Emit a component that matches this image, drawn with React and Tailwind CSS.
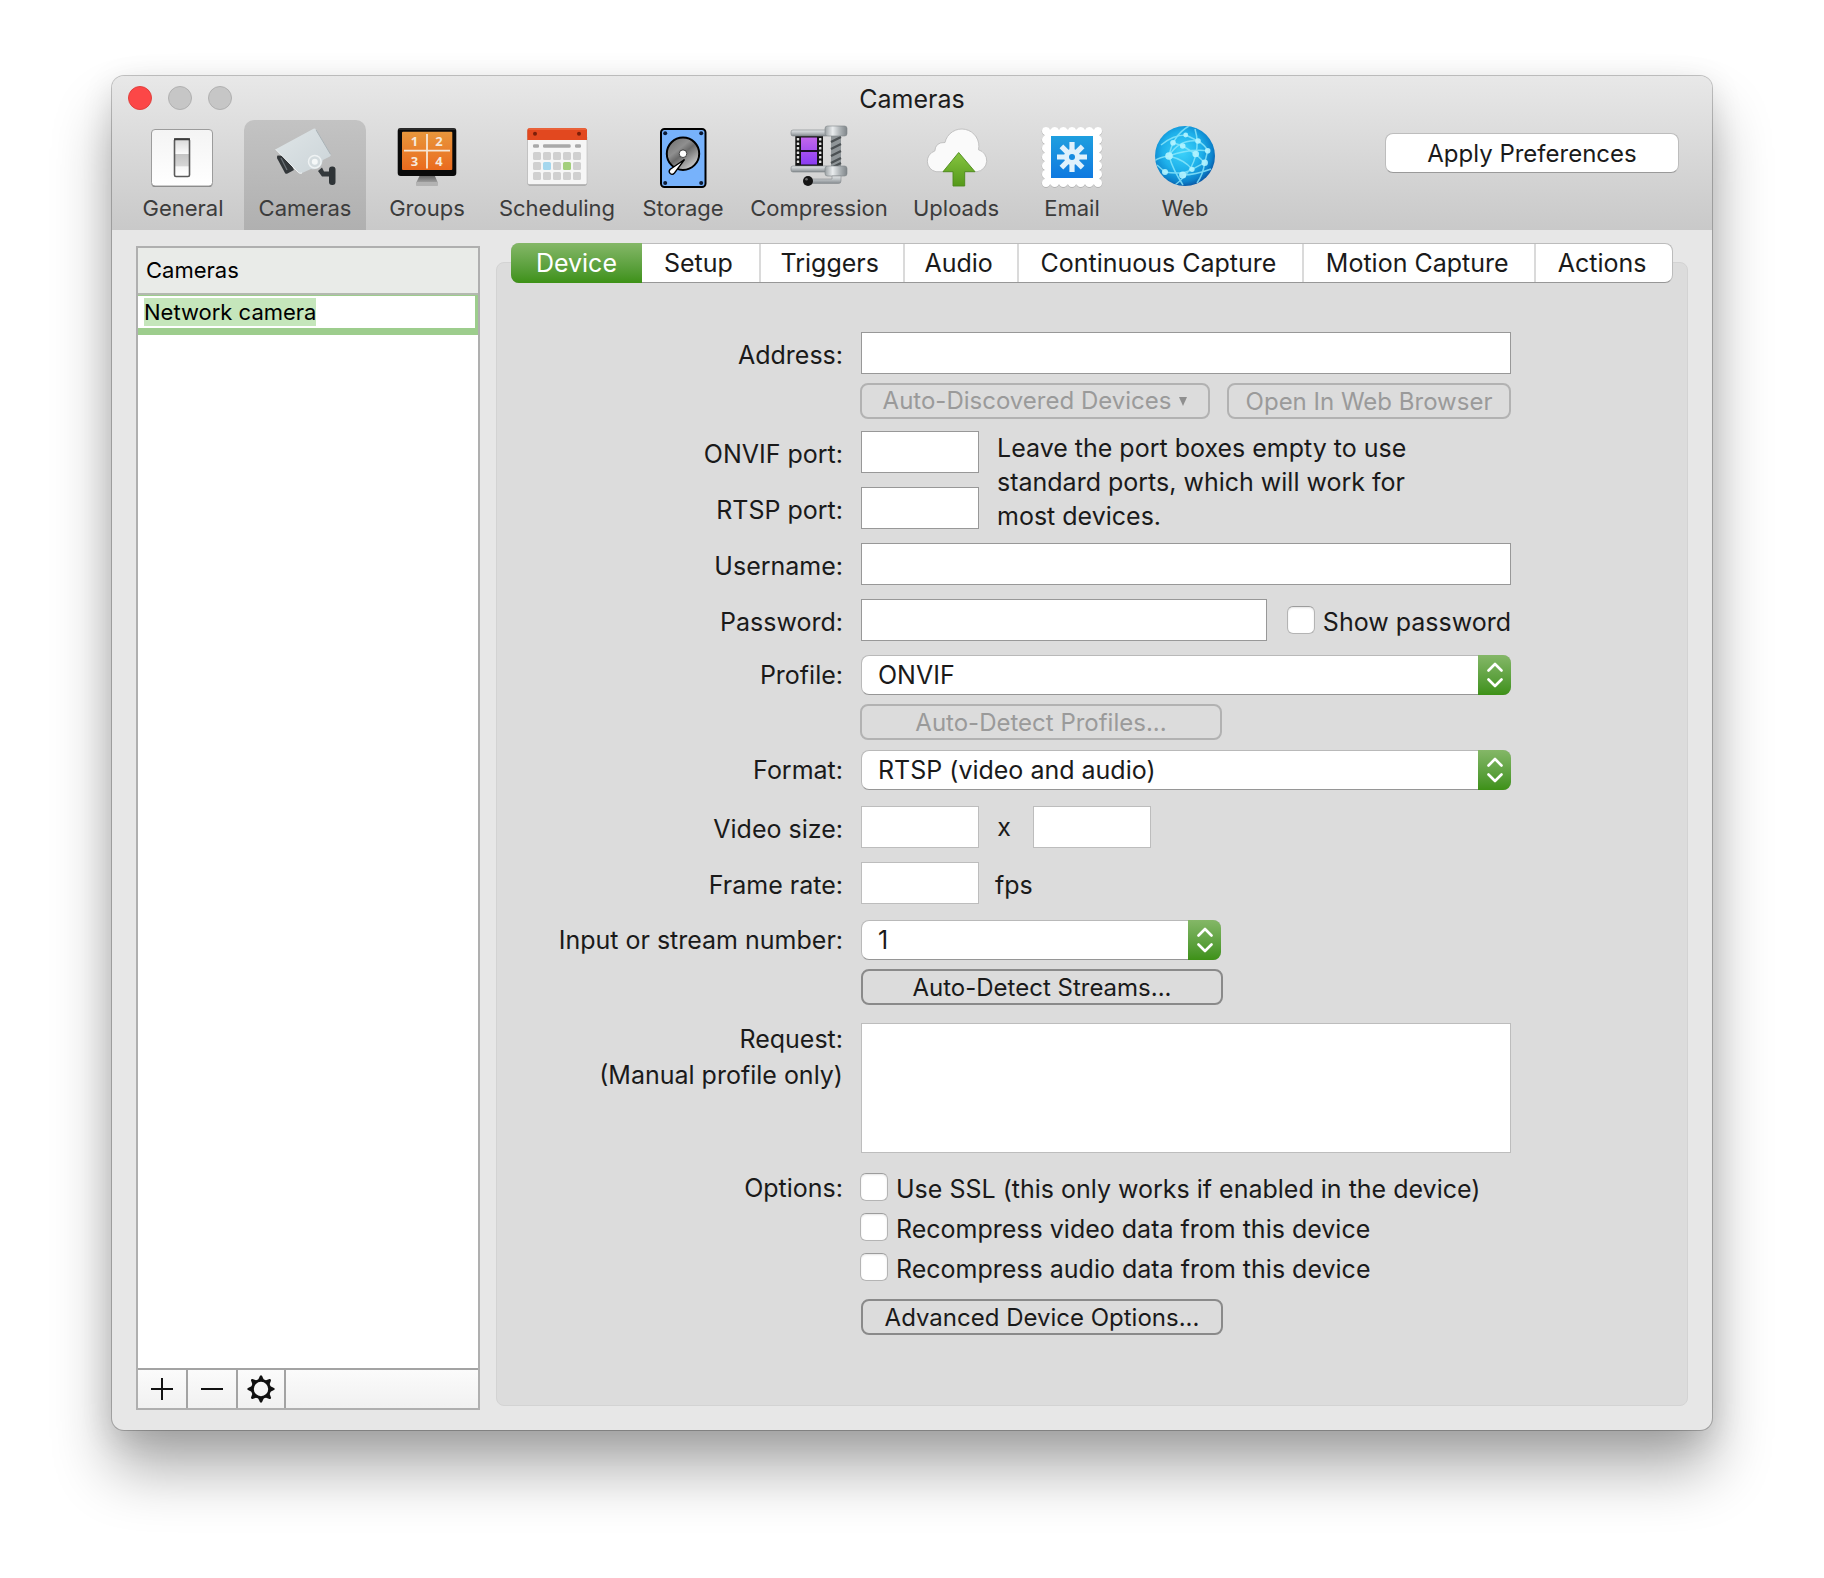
import React from "react";

function GeneralIcon() {
  return (
    <svg viewBox="0 0 64 64" className="size-16" aria-hidden="true">
      <defs>
        <linearGradient id="gen-plate" x1="0" y1="0" x2="0" y2="1">
          <stop offset="0" stopColor="#f4f4f4" />
          <stop offset="1" stopColor="#ffffff" />
        </linearGradient>
        <linearGradient id="gen-switch" x1="0" y1="0" x2="0" y2="1">
          <stop offset="0" stopColor="#d9d9d9" />
          <stop offset="0.4" stopColor="#fbfbfb" />
          <stop offset="0.41" stopColor="#c4c4c4" />
          <stop offset="0.72" stopColor="#d6d6d6" />
          <stop offset="0.74" stopColor="#f6f6f6" />
          <stop offset="1" stopColor="#ffffff" />
        </linearGradient>
      </defs>
      <rect x="0.5" y="5" width="61" height="57" rx="3.5" fill="#7d7d7d" />
      <rect x="0.5" y="4.5" width="61" height="56.5" rx="3.5" fill="url(#gen-plate)" stroke="#9c9c9c" />
      <rect x="23.500" y="14" width="15" height="37.500" rx="1.500" fill="url(#gen-switch)" stroke="#5a5a5a" strokeWidth="1.600" />
      <path d="M23 14.200h16" stroke="#3d3d3d" strokeWidth="2" />
    </svg>
  );
}

function CameraIcon() {
  return (
    <svg viewBox="0 0 64 64" className="size-16" aria-hidden="true">
      <defs>
        <linearGradient id="cam-body" x1="0" y1="0" x2="1" y2="1">
          <stop offset="0" stopColor="#dfe5e7" />
          <stop offset="1" stopColor="#cbd4d8" />
        </linearGradient>
      </defs>
      <path d="M4.500 30.500q-1 1.500-.3 3L12 48q1 1.300 2.500.6l6.500-3.500-7-14z" fill="#33373a" />
      <path d="M8 33l6 12" stroke="#6a7175" strokeWidth="1.200" />
      <path d="M45 46l4 5.500h9v-5h-7l-2-4z" fill="#34393c" />
      <rect x="56" y="41.500" width="6.500" height="18.500" rx="3" fill="#2f3437" />
      <path d="M2.700 24.300L40.500 3.800q1.600-.8 2.500.8L57.700 29.500q.5 1.200-.8 1.900l-7 3.600-1.500 5q-4 5.500-10.400 4L29 48q-2 .8-3.500-.4z" fill="url(#cam-body)" />
      <path d="M2.700 24.300L25.500 47.600q1.500 1.200 3.500.4" fill="none" stroke="#f3f6f7" strokeWidth="1" />
      <path d="M43 4.800l14.500 24.500" stroke="#a9b2b6" strokeWidth="1" />
      <circle cx="41.800" cy="36.700" r="6.300" fill="#d3dbde" stroke="#eef2f3" strokeWidth="1.500" />
      <circle cx="41.800" cy="36.700" r="3" fill="#f5f8f8" />
    </svg>
  );
}

function GroupsIcon() {
  return (
    <svg viewBox="0 0 64 64" className="size-16" aria-hidden="true">
      <defs>
        <linearGradient id="grp-screen" x1="0" y1="0" x2="0" y2="1">
          <stop offset="0" stopColor="#e8973c" />
          <stop offset="1" stopColor="#ea6a1e" />
        </linearGradient>
        <linearGradient id="grp-stand" x1="0" y1="0" x2="0" y2="1">
          <stop offset="0" stopColor="#5d5d5d" />
          <stop offset="1" stopColor="#a5a5a5" />
        </linearGradient>
      </defs>
      <path d="M25 50h14.500l3.500 8H21z" fill="url(#grp-stand)" />
      <rect x="21" y="57" width="22" height="4" rx="0.800" fill="#b3b3b3" />
      <rect x="2.700" y="3" width="58.600" height="48" rx="3" fill="#0a0a0a" />
      <rect x="3.500" y="3.600" width="57" height="1" rx="0.500" fill="#4a4a4a" />
      <rect x="7" y="6.700" width="50.300" height="38.300" rx="1" fill="url(#grp-screen)" />
      <path d="M32 9v34.500M9 25.700h46" stroke="#f6e6d6" strokeWidth="1.800" />
      <g fill="#f6e9dc" fontFamily="Open Sans, Noto Sans, sans-serif" fontWeight="700" fontSize="13" textAnchor="middle">
        <text x="19.500" y="21">1</text>
        <text x="44" y="21">2</text>
        <text x="19.500" y="41">3</text>
        <text x="44" y="41">4</text>
      </g>
    </svg>
  );
}

const calendarRows = [27, 37, 47];
const calendarCols = [8, 18, 28, 38, 48];

function SchedulingIcon() {
  return (
    <svg viewBox="0 0 64 64" className="size-16" aria-hidden="true">
      <rect x="2.500" y="4" width="59.500" height="56.500" rx="2" fill="#8c8c8c" />
      <path d="M2.500 12h59.500v46q0 1.500-1.500 1.500h-56.500q-1.500 0-1.500-1.500z" fill="#f6f6f6" stroke="#b5b5b5" strokeWidth="0.600" />
      <path d="M2.300 15V5.500q0-2.500 2.500-2.500h54.700q2.500 0 2.500 2.500V15z" fill="#e2481f" />
      <path d="M3.500 4h57.500" stroke="#ef7a55" strokeWidth="1" />
      <circle cx="10" cy="8.700" r="2" fill="#7c1f0a" />
      <circle cx="54" cy="8.700" r="2" fill="#7c1f0a" />
      <g fill="#a9a9a9">
        <rect x="8" y="19.200" width="6" height="3.600" rx="1.300" />
        <rect x="18" y="19.200" width="27.700" height="3.600" rx="1.300" />
        <rect x="50" y="19.200" width="6" height="3.600" rx="1.300" />
      </g>
      {calendarRows.map((y, r) =>
        calendarCols.map((x, c) => (
          <rect
            key={x + "-" + y}
            x={x}
            y={y}
            width="8"
            height="8"
            rx="1.500"
            fill={r === 1 && c === 1 ? "#a5d7ee" : r === 1 && c === 3 ? "#a3cf7c" : "#d0d0d0"}
          />
        ))
      )}
    </svg>
  );
}

function StorageIcon() {
  return (
    <svg viewBox="0 0 64 64" className="size-16" aria-hidden="true">
      <defs>
        <linearGradient id="hdd-disc" x1="0.100" y1="0" x2="0.900" y2="1">
          <stop offset="0" stopColor="#6f6f6f" />
          <stop offset="0.350" stopColor="#8f8f8f" />
          <stop offset="0.500" stopColor="#6a6a6a" />
          <stop offset="1" stopColor="#e4e4e4" />
        </linearGradient>
      </defs>
      <rect x="10" y="4" width="44.500" height="58" rx="3.500" fill="#77b2fb" stroke="#000" strokeWidth="2" />
      <g fill="#0c1a33">
        <circle cx="14.200" cy="8.200" r="2" />
        <circle cx="50.200" cy="8.200" r="2" />
        <circle cx="14.200" cy="58" r="2" />
        <circle cx="50.200" cy="58" r="2" />
      </g>
      <circle cx="32" cy="28.700" r="16.200" fill="url(#hdd-disc)" stroke="#000" strokeWidth="2" />
      <circle cx="32" cy="28.700" r="3.800" fill="#fff" stroke="#222" strokeWidth="0.800" />
      <path d="M33.500 34.500L23.500 48q-2 2.300-4.300.6-2-1.800-.2-4.100z" fill="#fff" stroke="#000" strokeWidth="1.300" />
    </svg>
  );
}

const sprocketRows = [13, 17.5, 22, 26.5, 31, 35.5];

function CompressionIcon() {
  return (
    <svg viewBox="0 0 64 64" className="size-16" aria-hidden="true">
      <defs>
        <linearGradient id="cmp-metal" x1="0" y1="0" x2="0" y2="1">
          <stop offset="0" stopColor="#e3e6e8" />
          <stop offset="0.500" stopColor="#b9bec1" />
          <stop offset="1" stopColor="#858b8f" />
        </linearGradient>
        <linearGradient id="cmp-nut" x1="0" y1="0" x2="1" y2="0">
          <stop offset="0" stopColor="#9ba1a4" />
          <stop offset="0.350" stopColor="#e9ecee" />
          <stop offset="0.700" stopColor="#aab0b3" />
          <stop offset="1" stopColor="#7f8589" />
        </linearGradient>
        <linearGradient id="cmp-film" x1="0" y1="0" x2="0" y2="1">
          <stop offset="0" stopColor="#c267ec" />
          <stop offset="1" stopColor="#8a3cf2" />
        </linearGradient>
      </defs>
      <rect x="44" y="10" width="10" height="32" fill="#8f9598" />
      <path d="M44 17l10-5M44 24l10-5M44 31l10-5M44 38l10-5M46 42l8-4" stroke="#4c5154" strokeWidth="2.400" />
      <rect x="8.300" y="10.500" width="27.700" height="31" fill="#141414" />
      <rect x="14" y="12.500" width="16" height="27" fill="url(#cmp-film)" />
      <rect x="14" y="25" width="16" height="2" fill="#1b1026" />
      {sprocketRows.map((y) => (
        <g key={y} fill="#e2e2e2">
          <rect x="9.800" y={y} width="2.400" height="2.600" rx="0.500" />
          <rect x="32" y={y} width="2.400" height="2.600" rx="0.500" />
        </g>
      ))}
      <rect x="4" y="5" width="37" height="6" rx="2" fill="url(#cmp-metal)" stroke="#7e8487" strokeWidth="0.600" />
      <rect x="4" y="41" width="37" height="6" rx="2" fill="url(#cmp-metal)" stroke="#7e8487" strokeWidth="0.600" />
      <rect x="38" y="1" width="22" height="10" rx="2.500" fill="url(#cmp-nut)" stroke="#7e8487" strokeWidth="0.600" />
      <rect x="38" y="41" width="22" height="10" rx="2.500" fill="url(#cmp-nut)" stroke="#7e8487" strokeWidth="0.600" />
      <path d="M22 54h23v-3h9v5q0 2.500-2.500 2.500H22z" fill="url(#cmp-metal)" stroke="#868c8f" strokeWidth="0.600" />
      <circle cx="21" cy="56" r="5" fill="#151515" />
      <circle cx="19.500" cy="54.200" r="1.300" fill="#6b6b6b" />
    </svg>
  );
}

function UploadsIcon() {
  return (
    <svg viewBox="0 0 64 64" className="size-16" aria-hidden="true">
      <defs>
        <linearGradient id="upl-arrow" x1="0" y1="0" x2="0" y2="1">
          <stop offset="0" stopColor="#86c440" />
          <stop offset="1" stopColor="#55991a" />
        </linearGradient>
      </defs>
      <path
        d="M12 46.700A10.700 10.700 0 0 1 10.800 26Q11.500 17 21 17.500A17 17 0 0 1 54.500 24.800A11.200 11.200 0 0 1 53 46.700z"
        fill="#fafafa"
        stroke="#bdbdbd"
        strokeWidth="0.900"
      />
      <path d="M34.700 27.500L51 46.700H40.700V61H29V46.700H19z" fill="url(#upl-arrow)" stroke="#4c8a1b" strokeWidth="0.900" strokeLinejoin="round" />
    </svg>
  );
}

const gearAngles = [0, 45, 90, 135];

function EmailIcon() {
  return (
    <svg viewBox="0 0 64 64" className="size-16" aria-hidden="true">
      <defs>
        <linearGradient id="eml-blue" x1="0" y1="0" x2="0" y2="1">
          <stop offset="0" stopColor="#1f9fdf" />
          <stop offset="1" stopColor="#0f79e0" />
        </linearGradient>
      </defs>
      <rect x="6" y="6.500" width="52" height="52" fill="#a9a9a9" stroke="#a9a9a9" strokeWidth="8.600" strokeLinecap="round" strokeDasharray="0 8.667" />
      <rect x="6" y="6" width="52" height="52" fill="#fff" stroke="#fff" strokeWidth="8" strokeLinecap="round" strokeDasharray="0 8.667" />
      <rect x="4.500" y="4.500" width="55" height="55" rx="2" fill="#fff" />
      <rect x="11" y="11" width="42" height="42" fill="url(#eml-blue)" />
      <g stroke="#dff1fc" strokeWidth="5.200">
        {gearAngles.map((a) => (
          <path key={a} d="M32 17v30" transform={"rotate(" + a + " 32 32)"} />
        ))}
      </g>
      <circle cx="32" cy="32" r="8" fill="#dff1fc" />
      <circle cx="32" cy="32" r="3" fill="#168be0" />
    </svg>
  );
}

const webNodes = [
  [16, 31, 3.8], [32.7, 10, 2.4], [45, 16, 2.8], [54.7, 25.7, 2.8], [42.7, 29, 3.3],
  [51.7, 37.7, 3.2], [39, 44.3, 2.6], [29.7, 50, 3.6], [12, 47, 3], [20, 17.7, 2.8], [29.7, 21, 2.8],
];

function WebIcon() {
  return (
    <svg viewBox="0 0 64 64" className="size-16" aria-hidden="true">
      <defs>
        <radialGradient id="web-globe" cx="0.450" cy="0.420" r="0.600">
          <stop offset="0" stopColor="#3fd4fb" />
          <stop offset="0.550" stopColor="#1eb0ea" />
          <stop offset="0.850" stopColor="#0d83cc" />
          <stop offset="1" stopColor="#0a56a4" />
        </radialGradient>
        <clipPath id="web-clip">
          <circle cx="32" cy="31" r="30" />
        </clipPath>
      </defs>
      <circle cx="32" cy="31" r="30" fill="url(#web-globe)" />
      <g clipPath="url(#web-clip)">
        <g fill="none" stroke="#8fe9fc" strokeWidth="1.500" opacity="0.800">
          <path d="M16 31Q20 10 36 1M16 31Q2 33 0 38M16 31Q26 14 45 16M16 31Q20 45 30 60" />
          <path d="M16 31Q32 35 39 44.300L51.700 37.700M16 31Q34 24 54.700 25.700M42.700 29L29.700 21 20 17.700" />
          <path d="M42.700 29Q46 18 42 4M42.700 29L51.700 37.700M42.700 29Q40 46 22 60M39 44.300Q30 50 12 47L4 40" />
          <path d="M32.700 10Q20 10 8 20M32.700 10L45 16Q52 20 54.700 25.700L51.700 37.700Q50 50 44 58M29.700 50Q42 50 58 44" />
        </g>
        {webNodes.map(([x, y, r]) => (
          <circle key={x + "-" + y} cx={x} cy={y} r={r} fill="#b4f4ff" opacity="0.900" />
        ))}
      </g>
    </svg>
  );
}

function FooterGear() {
  return (
    <svg viewBox="0 0 28 28" className="size-7" aria-hidden="true">
      <circle cx="14" cy="14" r="8.600" fill="none" stroke="#111" strokeWidth="2.800" />
      {[0, 45, 90, 135, 180, 225, 270, 315].map((a) => (
        <path key={a} d="M10.800 5.500L12.900 1q1.100-1.500 2.200 0l2.100 4.500z" fill="#111" transform={"rotate(" + a + " 14 14)"} />
      ))}
    </svg>
  );
}

const toolbarItems = [
  { label: "General", Icon: GeneralIcon, width: "w-[122px]" },
  { label: "Cameras", Icon: CameraIcon, width: "w-[122px]", active: true },
  { label: "Groups", Icon: GroupsIcon, width: "w-[122px]" },
  { label: "Scheduling", Icon: SchedulingIcon, width: "w-[138px]" },
  { label: "Storage", Icon: StorageIcon, width: "w-[114px]" },
  { label: "Compression", Icon: CompressionIcon, width: "w-[158px]" },
  { label: "Uploads", Icon: UploadsIcon, width: "w-[116px]" },
  { label: "Email", Icon: EmailIcon, width: "w-[116px]" },
  { label: "Web", Icon: WebIcon, width: "w-[110px]" },
];

const tabs = ["Device", "Setup", "Triggers", "Audio", "Continuous Capture", "Motion Capture", "Actions"];

function Toolbar() {
  return (
    <header className="bg-linear-to-b from-[#e8e8e8] to-[#c9c9c9]">
      <div className="grid h-11 grid-cols-[1fr_auto_1fr] items-center px-4">
        <div className="flex gap-4">
          <button type="button" aria-label="Close" className="size-6 rounded-full border border-[#e0403d] bg-[#fc4747]" />
          <button type="button" aria-label="Minimize" className="size-6 rounded-full border border-[#b0b0b0] bg-[#c6c6c6]" />
          <button type="button" aria-label="Zoom" className="size-6 rounded-full border border-[#b0b0b0] bg-[#c6c6c6]" />
        </div>
        <h1 className="pt-0.5 text-[25px] leading-[30px] text-[#1c1c1c]">Cameras</h1>
      </div>
      <div className="flex items-start justify-between pl-2.5 pr-[33px]">
        <nav className="flex" aria-label="Preferences">
          {toolbarItems.map(({ label, Icon, width, active }) => (
            <button
              key={label}
              type="button"
              aria-pressed={!!active}
              className={
                width +
                " flex h-[110px] flex-col items-center gap-1.5 rounded-t-[10px] pt-[5px] text-[22px] leading-[26px] text-[#3c3c3c]" +
                (active ? " bg-linear-to-b from-[#c3c3c3] to-[#b0b0b0]" : "")
              }
            >
              <Icon />
              {label}
            </button>
          ))}
        </nav>
        <button
          type="button"
          className="mt-[13px] h-10 w-[294px] rounded-lg border border-[#bdbdbd] border-b-[#9a9a9a] bg-white pt-0.5 text-[24px] leading-[30px] text-[#1a1a1a]"
        >
          Apply Preferences
        </button>
      </div>
    </header>
  );
}

function Sidebar() {
  const cell = "flex items-center justify-center border-r-2 border-[#a3a3a3]";
  return (
    <aside className="mt-[3px] flex w-[344px] shrink-0 flex-col border-2 border-[#afafaf] bg-white">
      <h2 className="flex h-[47px] items-center border-b-2 border-[#b3b9b0] bg-[#e9ebe8] px-2 pb-0.5 text-[22px] leading-[26px] text-black">
        Cameras
      </h2>
      <div className="flex border-t border-r-[3px] border-b-[7px] border-[#9dcd8d] bg-white px-1.5 py-0.5">
        <input
          aria-label="Camera name"
          defaultValue="Network camera"
          className="field-sizing-content h-7 bg-[#c5e6bb] text-[22px] leading-[28px] text-black outline-none"
        />
      </div>
      <div className="flex-1" />
      <div className="flex h-10 border-t-2 border-[#a3a3a3] bg-linear-to-b from-[#fbfbfb] to-[#f1f1f1]">
        <button type="button" aria-label="Add camera" className={cell + " w-[50px]"}>
          <svg viewBox="0 0 22 22" className="size-[22px]" aria-hidden="true">
            <path d="M11 0v22M0 11h22" stroke="#111" strokeWidth="2" />
          </svg>
        </button>
        <button type="button" aria-label="Remove camera" className={cell + " w-[50px]"}>
          <svg viewBox="0 0 22 22" className="size-[22px]" aria-hidden="true">
            <path d="M0 11h22" stroke="#111" strokeWidth="2" />
          </svg>
        </button>
        <button type="button" aria-label="Camera actions" className={cell + " w-12"}>
          <FooterGear />
        </button>
      </div>
    </aside>
  );
}

function Row({ label, htmlFor, className = "mt-3.5", labelClass = "pt-1", children }) {
  return (
    <div className={"flex items-center gap-[18px] " + className}>
      <label htmlFor={htmlFor} className={"w-[346px] shrink-0 text-right " + labelClass}>
        {label}
      </label>
      <div className="flex min-w-0 flex-1 items-center">{children}</div>
    </div>
  );
}

function TextBox({ id, type = "text", className = "w-full", tone = "border-[#989898]", label }) {
  return <input id={id} type={type} aria-label={label} className={"h-[42px] border bg-white px-2 outline-none " + tone + " " + className} />;
}

function Select({ id, value, className = "w-full" }) {
  return (
    <div className={"relative " + className}>
      <select
        id={id}
        defaultValue={value}
        className="block h-10 w-full appearance-none rounded-lg border border-[#b9b9b9] border-b-[#969696] bg-white pl-4 pr-10 leading-[30px] outline-none"
      >
        <option>{value}</option>
      </select>
      <span className="pointer-events-none absolute inset-y-0 right-0 flex w-[33px] items-center justify-center rounded-r-lg bg-linear-to-b from-[#84b767] to-[#3d9115]">
        <svg viewBox="0 0 16 26" className="h-[26px] w-4" aria-hidden="true">
          <path d="M1.500 8.500L8 2l6.500 6.500M1.500 17.500L8 24l6.500-6.500" fill="none" stroke="#fff" strokeWidth="2.600" strokeLinecap="round" strokeLinejoin="round" />
        </svg>
      </span>
    </div>
  );
}

function PushButton({ children, disabled, className = "w-[362px] pt-0.5" }) {
  return (
    <button
      type="button"
      disabled={disabled}
      className={
        "h-9 rounded-lg border-2 text-[24px] leading-[30px] whitespace-nowrap " +
        (disabled ? "border-[#b2b2b2] text-[#9a9a9a] " : "border-[#8a8a8a] text-[#1a1a1a] ") +
        className
      }
    >
      {children}
    </button>
  );
}

function CheckBox({ children }) {
  return (
    <label className="flex h-7 items-center gap-2 whitespace-nowrap">
      <input
        type="checkbox"
        className="size-7 shrink-0 appearance-none rounded-md border border-[#b4b4b4] border-t-[#9c9c9c] bg-white shadow-[inset_0_1px_2px_#e4e4e4] checked:bg-[#4c9a25]"
      />
      <span className="pt-1">{children}</span>
    </label>
  );
}

function DeviceForm() {
  return (
    <form className="mr-[176px] pt-[69px] pb-[70px] leading-[30px]" onSubmit={(e) => e.preventDefault()}>
      <Row label="Address:" htmlFor="address" className="">
        <TextBox id="address" />
      </Row>
      <div className="mt-[9px] ml-[363px] flex justify-between">
        <PushButton disabled className="w-[350px]">
          <span className="flex items-center justify-center gap-2">
            Auto-Discovered Devices
            <svg viewBox="0 0 8 9" className="h-[9px] w-2" aria-hidden="true">
              <path d="M0 0h8L4 9z" fill="#8f8f8f" />
            </svg>
          </span>
        </PushButton>
        <PushButton disabled className="w-[284px] pt-0.5">Open In Web Browser</PushButton>
      </div>
      <div className="mt-3 flex gap-[18px]">
        <div>
          <Row label="ONVIF port:" htmlFor="onvif" className="">
            <TextBox id="onvif" className="w-[118px]" />
          </Row>
          <Row label="RTSP port:" htmlFor="rtsp">
            <TextBox id="rtsp" className="w-[118px]" />
          </Row>
        </div>
        <p className="w-[430px] leading-[34px]">
          Leave the port boxes empty to use standard ports, which will work for most devices.
        </p>
      </div>
      <Row label="Username:" htmlFor="username" className="mt-2.5">
        <TextBox id="username" />
      </Row>
      <Row label="Password:" htmlFor="password">
        <TextBox id="password" type="password" className="mr-5 min-w-0 flex-1" />
        <CheckBox>Show password</CheckBox>
      </Row>
      <Row label="Profile:" htmlFor="profile" labelClass="">
        <Select id="profile" value="ONVIF" />
      </Row>
      <div className="mt-[9px] ml-[363px] flex">
        <PushButton disabled>Auto-Detect Profiles...</PushButton>
      </div>
      <Row label="Format:" htmlFor="format" className="mt-2.5" labelClass="">
        <Select id="format" value="RTSP (video and audio)" />
      </Row>
      <Row label="Video size:" htmlFor="vwidth" className="mt-4">
        <TextBox id="vwidth" className="w-[118px]" tone="border-[#bdbdbd]" />
        <span className="w-[54px] pr-1 text-center">x</span>
        <TextBox id="vheight" label="Video height" className="w-[118px]" tone="border-[#bdbdbd]" />
      </Row>
      <Row label="Frame rate:" htmlFor="fps">
        <TextBox id="fps" className="w-[118px]" tone="border-[#bdbdbd]" />
        <span className="pl-4 pt-1">fps</span>
      </Row>
      <Row label="Input or stream number:" htmlFor="stream" className="mt-4" labelClass="">
        <Select id="stream" value="1" className="w-[360px]" />
      </Row>
      <div className="mt-[9px] ml-[364px] flex">
        <PushButton>Auto-Detect Streams...</PushButton>
      </div>
      <div className="mt-[18px] flex gap-[18px]">
        <label htmlFor="request" className="-mt-0.5 w-[346px] shrink-0 text-right leading-[36px]">
          Request:
          <br />
          (Manual profile only)
        </label>
        <textarea id="request" className="h-[130px] min-w-0 flex-1 resize-none border border-[#bdbdbd] bg-white p-2 outline-none" />
      </div>
      <div role="group" aria-labelledby="options-label" className="mt-5 flex gap-[17px]">
        <span id="options-label" className="w-[346px] shrink-0 text-right">Options:</span>
        <div className="flex flex-col gap-3">
          <CheckBox>Use SSL (this only works if enabled in the device)</CheckBox>
          <CheckBox>Recompress video data from this device</CheckBox>
          <CheckBox>Recompress audio data from this device</CheckBox>
        </div>
      </div>
      <div className="mt-[18px] ml-[364px] flex">
        <PushButton>Advanced Device Options...</PushButton>
      </div>
    </form>
  );
}

function TabBar() {
  return (
    <div
      role="tablist"
      className="relative z-10 mx-[15px] grid h-10 grid-cols-[130fr_117fr_144fr_114fr_286fr_232fr_138fr] rounded-lg border border-[#bcbcbc] border-b-[#979797] bg-white"
    >
      {tabs.map((tab, i) => (
        <button
          key={tab}
          type="button"
          role="tab"
          aria-selected={i === 0}
          className={
            "whitespace-nowrap leading-[30px] " +
            (i === 0
              ? "-my-px -ml-px rounded-l-lg bg-linear-to-b from-[#84b767] to-[#3d9115] text-white"
              : i > 1
                ? "border-l-2 border-[#dadada] pr-1"
                : "pr-1")
          }
        >
          {tab}
        </button>
      ))}
    </div>
  );
}

export default function App() {
  return (
    <div className="min-h-screen bg-white px-28 pt-[76px] pb-[147px] font-['Inter','Liberation_Sans',sans-serif] text-[25px] text-[#1a1a1a]">
      <div className="overflow-hidden rounded-[12px] bg-[#e7e7e7] shadow-[0_0_0_1px_rgba(0,0,0,0.22),0_40px_60px_rgba(0,0,0,0.32),0_8px_32px_rgba(0,0,0,0.12)]">
        <Toolbar />
        <main className="flex gap-4 px-6 pt-[13px] pb-5">
          <Sidebar />
          <section className="mb-1 min-w-0 flex-1">
            <TabBar />
            <div className="-mt-[21px] rounded-lg border border-[#d3d3d3] bg-[#dcdcdc]">
              <DeviceForm />
            </div>
          </section>
        </main>
      </div>
    </div>
  );
}
